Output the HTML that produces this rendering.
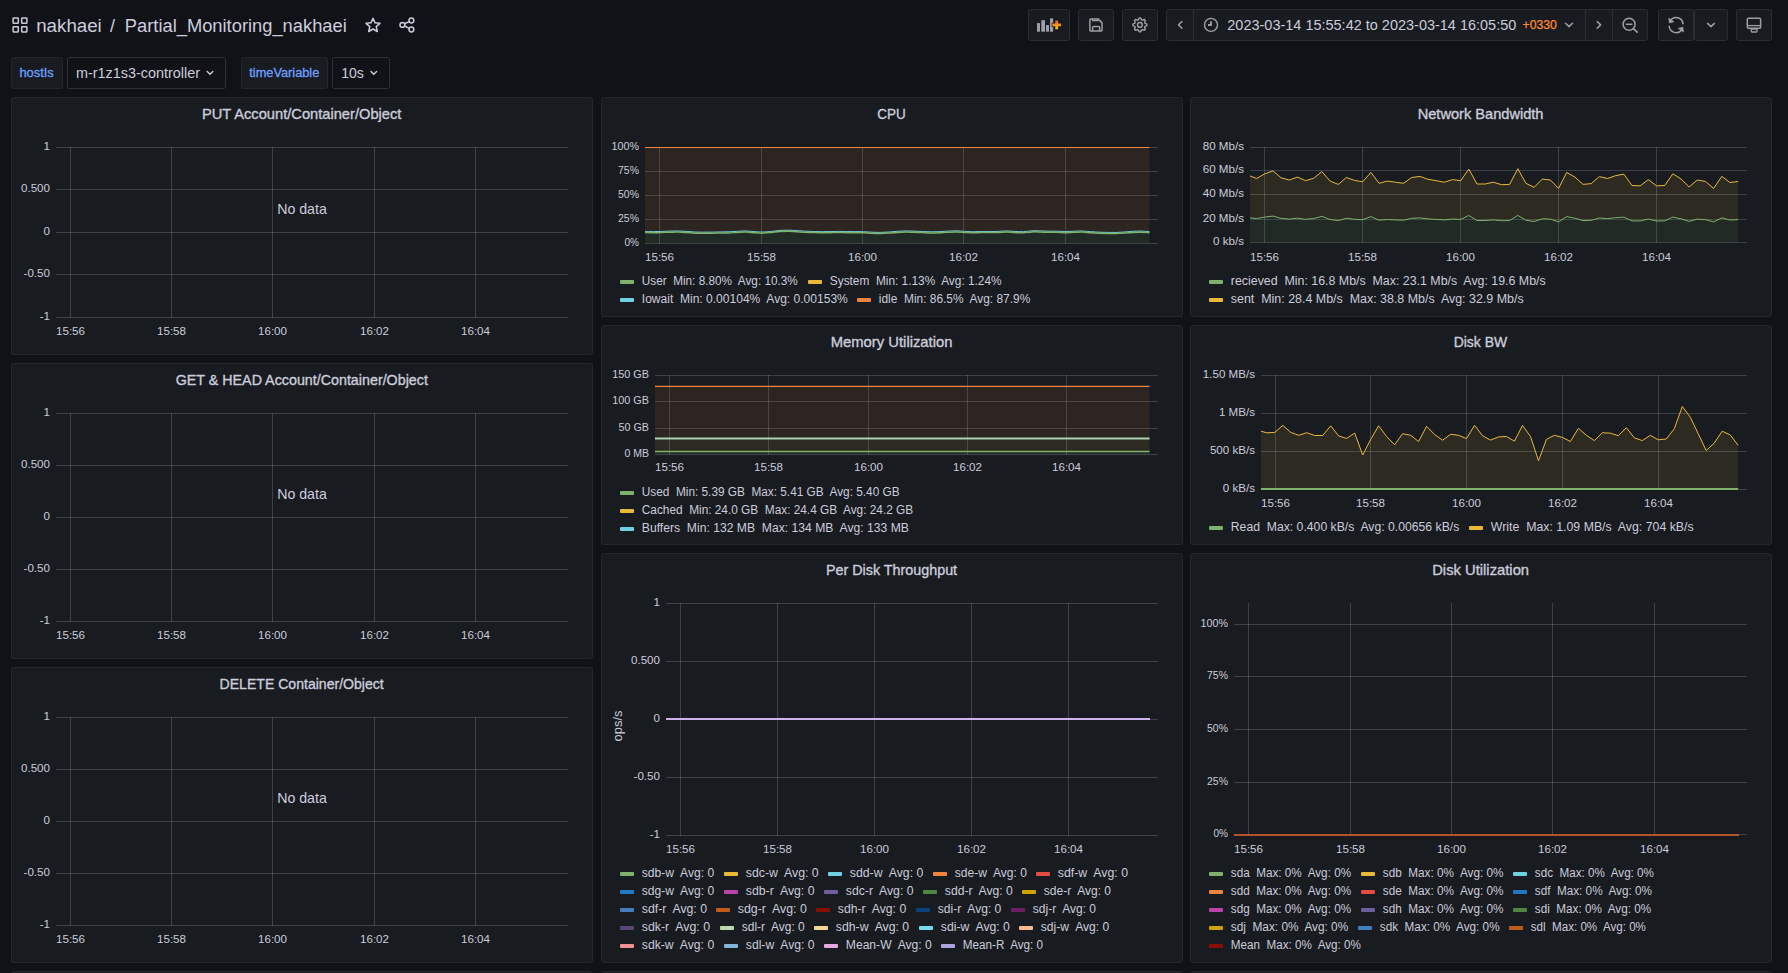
<!DOCTYPE html><html><head><meta charset="utf-8"><style>html,body{margin:0;padding:0;background:#111217;overflow:hidden}svg{display:block;font-family:"Liberation Sans", sans-serif}</style></head><body>
<svg width="1788" height="973" viewBox="0 0 1788 973">
<rect width="1788" height="973" fill="#111217"/>
<rect x="13.1" y="18.099999999999998" width="5.2" height="5.2" rx="0.6" fill="none" stroke="rgb(204,204,220)" stroke-width="1.5"/>
<rect x="21.7" y="18.099999999999998" width="5.2" height="5.2" rx="0.6" fill="none" stroke="rgb(204,204,220)" stroke-width="1.5"/>
<rect x="13.1" y="26.7" width="5.2" height="5.2" rx="0.6" fill="none" stroke="rgb(204,204,220)" stroke-width="1.5"/>
<rect x="21.7" y="26.7" width="5.2" height="5.2" rx="0.6" fill="none" stroke="rgb(204,204,220)" stroke-width="1.5"/>
<text x="36.2" y="32" font-size="18" fill="rgb(204,204,220)" textLength="65.6" lengthAdjust="spacingAndGlyphs">nakhaei</text>
<text x="110" y="32" font-size="18" fill="rgb(204,204,220)">/</text>
<text x="124.8" y="32" font-size="18" fill="rgb(204,204,220)" textLength="222" lengthAdjust="spacingAndGlyphs">Partial_Monitoring_nakhaei</text>
<polygon points="373.00,18.30 375.00,22.85 379.94,23.34 376.23,26.65 377.29,31.51 373.00,29.00 368.71,31.51 369.77,26.65 366.06,23.34 371.00,22.85" fill="none" stroke="rgb(204,204,220)" stroke-width="1.5" stroke-linejoin="round"/>
<g fill="none" stroke="rgb(204,204,220)" stroke-width="1.5"><circle cx="411.4" cy="20.5" r="2.4"/><circle cx="402.4" cy="24.9" r="2.4"/><circle cx="411.4" cy="29.5" r="2.4"/><line x1="404.6" y1="23.8" x2="409.2" y2="21.6"/><line x1="404.6" y1="26.0" x2="409.2" y2="28.3"/></g>
<rect x="1028.5" y="9.5" width="41" height="31" rx="2" fill="#181b1f" stroke="#2b2d32" stroke-width="1"/>
<rect x="1078.5" y="9.5" width="35" height="31" rx="2" fill="#181b1f" stroke="#2b2d32" stroke-width="1"/>
<rect x="1122.5" y="9.5" width="35" height="31" rx="2" fill="#181b1f" stroke="#2b2d32" stroke-width="1"/>
<rect x="1166.5" y="9.5" width="481" height="31" rx="2" fill="#181b1f" stroke="#2b2d32" stroke-width="1"/>
<line x1="1193.5" y1="10" x2="1193.5" y2="40" stroke="#2b2d32" stroke-width="1"/>
<line x1="1585.5" y1="10" x2="1585.5" y2="40" stroke="#2b2d32" stroke-width="1"/>
<line x1="1612.5" y1="10" x2="1612.5" y2="40" stroke="#2b2d32" stroke-width="1"/>
<rect x="1658.5" y="9.5" width="35" height="31" rx="2" fill="#181b1f" stroke="#2b2d32" stroke-width="1"/>
<rect x="1694.5" y="9.5" width="33" height="31" rx="2" fill="#181b1f" stroke="#2b2d32" stroke-width="1"/>
<rect x="1736.5" y="9.5" width="35" height="31" rx="2" fill="#181b1f" stroke="#2b2d32" stroke-width="1"/>
<rect x="1037" y="23.1" width="3" height="8.599999999999998" fill="#9c9fa7"/>
<rect x="1041.3" y="20.2" width="3.7000000000000455" height="11.5" fill="#9c9fa7"/>
<rect x="1046" y="25.1" width="3" height="6.599999999999998" fill="#9c9fa7"/>
<rect x="1050" y="18.4" width="3.2000000000000455" height="13.3" fill="#9c9fa7"/>
<defs><linearGradient id="og" x1="0" y1="0" x2="0" y2="1"><stop offset="0" stop-color="#F05A28"/><stop offset="1" stop-color="#FBCA0A"/></linearGradient></defs>
<path d="M1055.3,20.6h2.8v2.9h2.9v2.8h-2.9v2.9h-2.8v-2.9h-2.9v-2.8h2.9z" fill="none" stroke="#181b1f" stroke-width="1.4"/>
<path d="M1055.3,20.6h2.8v2.9h2.9v2.8h-2.9v2.9h-2.8v-2.9h-2.9v-2.8h2.9z" fill="url(#og)"/>
<path d="M1090.8,18.9 h7.2 l4,4 v7.3 a0.9,0.9 0 0 1 -0.9,0.9 h-10.3 a0.9,0.9 0 0 1 -0.9,-0.9 v-10.4 a0.9,0.9 0 0 1 0.9,-0.9z" fill="none" stroke="#9c9fa7" stroke-width="1.5" stroke-linejoin="round"/>
<path d="M1092.6,19 v1.7 h5.2 v-1.7" fill="none" stroke="#9c9fa7" stroke-width="1.3"/>
<path d="M1092.6,31 v-3.6 a1,1 0 0 1 1,-1 h5 a1,1 0 0 1 1,1 v3.6" fill="none" stroke="#9c9fa7" stroke-width="1.5"/>
<polygon points="1146.90,24.90 1146.87,25.59 1145.93,26.10 1144.97,26.44 1144.80,26.93 1144.57,27.40 1145.01,28.32 1145.31,29.34 1144.85,29.85 1144.34,30.31 1143.32,30.01 1142.40,29.57 1141.93,29.80 1141.44,29.97 1141.10,30.93 1140.59,31.87 1139.90,31.90 1139.21,31.87 1138.70,30.93 1138.36,29.97 1137.87,29.80 1137.40,29.57 1136.48,30.01 1135.46,30.31 1134.95,29.85 1134.49,29.34 1134.79,28.32 1135.23,27.40 1135.00,26.93 1134.83,26.44 1133.87,26.10 1132.93,25.59 1132.90,24.90 1132.93,24.21 1133.87,23.70 1134.83,23.36 1135.00,22.87 1135.23,22.40 1134.79,21.48 1134.49,20.46 1134.95,19.95 1135.46,19.49 1136.48,19.79 1137.40,20.23 1137.87,20.00 1138.36,19.83 1138.70,18.87 1139.21,17.93 1139.90,17.90 1140.59,17.93 1141.10,18.87 1141.44,19.83 1141.93,20.00 1142.40,20.23 1143.32,19.79 1144.34,19.49 1144.85,19.95 1145.31,20.46 1145.01,21.48 1144.57,22.40 1144.80,22.87 1144.97,23.36 1145.93,23.70 1146.87,24.21" fill="none" stroke="#9c9fa7" stroke-width="1.4" stroke-linejoin="round"/>
<circle cx="1139.9" cy="24.9" r="2.4" fill="none" stroke="#9c9fa7" stroke-width="1.4"/>
<polyline points="1181.9,21.5 1178.5,24.9 1181.9,28.3" fill="none" stroke="#9c9fa7" stroke-width="1.5" stroke-linecap="round" stroke-linejoin="round"/>
<polyline points="1597.2,21.5 1600.6,24.9 1597.2,28.3" fill="none" stroke="#9c9fa7" stroke-width="1.5" stroke-linecap="round" stroke-linejoin="round"/>
<polyline points="1565.5,23.3 1569,26.6 1572.5,23.3" fill="none" stroke="#9c9fa7" stroke-width="1.5" stroke-linecap="round" stroke-linejoin="round"/>
<polyline points="1707.6,23.4 1711,26.6 1714.4,23.4" fill="none" stroke="#9c9fa7" stroke-width="1.5" stroke-linecap="round" stroke-linejoin="round"/>
<circle cx="1211" cy="24.9" r="6.5" fill="none" stroke="#9c9fa7" stroke-width="1.4"/>
<polyline points="1211,21.3 1211,25 1208,25" fill="none" stroke="#9c9fa7" stroke-width="1.8"/>
<text x="1227.3" y="30" font-size="15" fill="rgb(204,204,220)" textLength="289" lengthAdjust="spacingAndGlyphs">2023-03-14 15:55:42 to 2023-03-14 16:05:50</text>
<text x="1522.5" y="29" font-size="12" fill="#FF8833" stroke="#FF8833" stroke-width="0.25" textLength="34.3" lengthAdjust="spacingAndGlyphs">+0330</text>
<circle cx="1629.1" cy="24.3" r="6" fill="none" stroke="#9c9fa7" stroke-width="1.5"/>
<line x1="1625.8" y1="24.3" x2="1632.4" y2="24.3" stroke="#9c9fa7" stroke-width="1.5"/>
<line x1="1633.4" y1="28.6" x2="1637.2" y2="32.2" stroke="#9c9fa7" stroke-width="1.6" stroke-linecap="round"/>
<path d="M1670.2,20.6 A7,7 0 0 1 1683,24.2" fill="none" stroke="#9c9fa7" stroke-width="1.5"/>
<path d="M1682,29.6 A7,7 0 0 1 1669.2,25.8" fill="none" stroke="#9c9fa7" stroke-width="1.5"/>
<path d="M1668.8,18.3 l0.6,4.6 l4.4,-1.2z" fill="#9c9fa7" stroke="#9c9fa7" stroke-width="0.8" stroke-linejoin="round"/>
<path d="M1683.4,31.8 l-0.6,-4.6 l-4.4,1.2z" fill="#9c9fa7" stroke="#9c9fa7" stroke-width="0.8" stroke-linejoin="round"/>
<rect x="1747.3" y="18.3" width="13.3" height="10" rx="1.2" fill="none" stroke="#9c9fa7" stroke-width="1.5"/>
<line x1="1747.3" y1="25.6" x2="1760.6" y2="25.6" stroke="#9c9fa7" stroke-width="1.3"/>
<rect x="1751.2" y="29" width="5.8" height="3" rx="0.8" fill="none" stroke="#9c9fa7" stroke-width="1.3"/>
<rect x="11.5" y="57.5" width="51" height="31" rx="2" fill="#181b1f" stroke="#24262b" stroke-width="1"/>
<rect x="67.5" y="57.5" width="158" height="31" rx="2" fill="#111217" stroke="#2f3136" stroke-width="1"/>
<rect x="241.5" y="57.5" width="86" height="31" rx="2" fill="#181b1f" stroke="#24262b" stroke-width="1"/>
<rect x="332.5" y="57.5" width="57" height="31" rx="2" fill="#111217" stroke="#2f3136" stroke-width="1"/>
<text x="19.4" y="77" font-size="12.4" fill="#6E9FFF" stroke="#6E9FFF" stroke-width="0.3" textLength="34.4" lengthAdjust="spacingAndGlyphs">hostIs</text>
<text x="249.3" y="77" font-size="12.4" fill="#6E9FFF" stroke="#6E9FFF" stroke-width="0.3" textLength="70.0" lengthAdjust="spacingAndGlyphs">timeVariable</text>
<text x="76" y="78" font-size="14" fill="rgb(204,204,220)" textLength="124" lengthAdjust="spacingAndGlyphs">m-r1z1s3-controller</text>
<text x="341.3" y="78" font-size="14" fill="rgb(204,204,220)">10s</text>
<polyline points="207.2,71.5 210,74.2 212.8,71.5" fill="none" stroke="rgb(204,204,220)" stroke-width="1.4" stroke-linecap="round" stroke-linejoin="round"/>
<polyline points="371,71.5 373.8,74.2 376.6,71.5" fill="none" stroke="rgb(204,204,220)" stroke-width="1.4" stroke-linecap="round" stroke-linejoin="round"/>
<rect x="11.5" y="97.5" width="581" height="257" rx="2.5" fill="#181b1f" stroke="#25272c" stroke-width="1"/>
<text x="201.9" y="119" font-size="14.6" fill="rgb(204,204,220)" stroke="rgb(204,204,220)" stroke-width="0.35" textLength="199.5" lengthAdjust="spacingAndGlyphs">PUT Account/Container/Object</text>
<line x1="56" y1="147.5" x2="568" y2="147.5" stroke="rgba(204,204,220,0.21)" stroke-width="1"/>
<line x1="56" y1="189.5" x2="568" y2="189.5" stroke="rgba(204,204,220,0.21)" stroke-width="1"/>
<line x1="56" y1="232.5" x2="568" y2="232.5" stroke="rgba(204,204,220,0.21)" stroke-width="1"/>
<line x1="56" y1="274.5" x2="568" y2="274.5" stroke="rgba(204,204,220,0.21)" stroke-width="1"/>
<line x1="56" y1="317.5" x2="568" y2="317.5" stroke="rgba(204,204,220,0.21)" stroke-width="1"/>
<line x1="70.5" y1="147" x2="70.5" y2="318" stroke="rgba(204,204,220,0.21)" stroke-width="1"/>
<line x1="171.5" y1="147" x2="171.5" y2="318" stroke="rgba(204,204,220,0.21)" stroke-width="1"/>
<line x1="272.5" y1="147" x2="272.5" y2="318" stroke="rgba(204,204,220,0.21)" stroke-width="1"/>
<line x1="374.5" y1="147" x2="374.5" y2="318" stroke="rgba(204,204,220,0.21)" stroke-width="1"/>
<line x1="475.5" y1="147" x2="475.5" y2="318" stroke="rgba(204,204,220,0.21)" stroke-width="1"/>
<text x="50" y="150.4" font-size="11.6" text-anchor="end" fill="rgb(204,204,220)" font-weight="normal" >1</text>
<text x="50" y="192.4" font-size="11.6" text-anchor="end" fill="rgb(204,204,220)" font-weight="normal" >0.500</text>
<text x="50" y="235.4" font-size="11.6" text-anchor="end" fill="rgb(204,204,220)" font-weight="normal" >0</text>
<text x="50" y="277.4" font-size="11.6" text-anchor="end" fill="rgb(204,204,220)" font-weight="normal" >-0.50</text>
<text x="50" y="320.4" font-size="11.6" text-anchor="end" fill="rgb(204,204,220)" font-weight="normal" >-1</text>
<text x="70.5" y="334.6" font-size="11.6" text-anchor="middle" fill="rgb(204,204,220)" font-weight="normal" >15:56</text>
<text x="171.5" y="334.6" font-size="11.6" text-anchor="middle" fill="rgb(204,204,220)" font-weight="normal" >15:58</text>
<text x="272.5" y="334.6" font-size="11.6" text-anchor="middle" fill="rgb(204,204,220)" font-weight="normal" >16:00</text>
<text x="374.5" y="334.6" font-size="11.6" text-anchor="middle" fill="rgb(204,204,220)" font-weight="normal" >16:02</text>
<text x="475.5" y="334.6" font-size="11.6" text-anchor="middle" fill="rgb(204,204,220)" font-weight="normal" >16:04</text>
<text x="302" y="213.5" font-size="14.2" text-anchor="middle" fill="rgb(204,204,220)" font-weight="normal" >No data</text>
<rect x="11.5" y="363.5" width="581" height="295" rx="2.5" fill="#181b1f" stroke="#25272c" stroke-width="1"/>
<text x="175.7" y="385" font-size="14.6" fill="rgb(204,204,220)" stroke="rgb(204,204,220)" stroke-width="0.35" textLength="252.2" lengthAdjust="spacingAndGlyphs">GET &amp; HEAD Account/Container/Object</text>
<line x1="56" y1="413.5" x2="568" y2="413.5" stroke="rgba(204,204,220,0.21)" stroke-width="1"/>
<line x1="56" y1="465.5" x2="568" y2="465.5" stroke="rgba(204,204,220,0.21)" stroke-width="1"/>
<line x1="56" y1="517.5" x2="568" y2="517.5" stroke="rgba(204,204,220,0.21)" stroke-width="1"/>
<line x1="56" y1="569.5" x2="568" y2="569.5" stroke="rgba(204,204,220,0.21)" stroke-width="1"/>
<line x1="56" y1="621.5" x2="568" y2="621.5" stroke="rgba(204,204,220,0.21)" stroke-width="1"/>
<line x1="70.5" y1="413" x2="70.5" y2="622" stroke="rgba(204,204,220,0.21)" stroke-width="1"/>
<line x1="171.5" y1="413" x2="171.5" y2="622" stroke="rgba(204,204,220,0.21)" stroke-width="1"/>
<line x1="272.5" y1="413" x2="272.5" y2="622" stroke="rgba(204,204,220,0.21)" stroke-width="1"/>
<line x1="374.5" y1="413" x2="374.5" y2="622" stroke="rgba(204,204,220,0.21)" stroke-width="1"/>
<line x1="475.5" y1="413" x2="475.5" y2="622" stroke="rgba(204,204,220,0.21)" stroke-width="1"/>
<text x="50" y="416.4" font-size="11.6" text-anchor="end" fill="rgb(204,204,220)" font-weight="normal" >1</text>
<text x="50" y="468.4" font-size="11.6" text-anchor="end" fill="rgb(204,204,220)" font-weight="normal" >0.500</text>
<text x="50" y="520.4" font-size="11.6" text-anchor="end" fill="rgb(204,204,220)" font-weight="normal" >0</text>
<text x="50" y="572.4" font-size="11.6" text-anchor="end" fill="rgb(204,204,220)" font-weight="normal" >-0.50</text>
<text x="50" y="624.4" font-size="11.6" text-anchor="end" fill="rgb(204,204,220)" font-weight="normal" >-1</text>
<text x="70.5" y="638.6" font-size="11.6" text-anchor="middle" fill="rgb(204,204,220)" font-weight="normal" >15:56</text>
<text x="171.5" y="638.6" font-size="11.6" text-anchor="middle" fill="rgb(204,204,220)" font-weight="normal" >15:58</text>
<text x="272.5" y="638.6" font-size="11.6" text-anchor="middle" fill="rgb(204,204,220)" font-weight="normal" >16:00</text>
<text x="374.5" y="638.6" font-size="11.6" text-anchor="middle" fill="rgb(204,204,220)" font-weight="normal" >16:02</text>
<text x="475.5" y="638.6" font-size="11.6" text-anchor="middle" fill="rgb(204,204,220)" font-weight="normal" >16:04</text>
<text x="302" y="498.5" font-size="14.2" text-anchor="middle" fill="rgb(204,204,220)" font-weight="normal" >No data</text>
<rect x="11.5" y="667.5" width="581" height="295" rx="2.5" fill="#181b1f" stroke="#25272c" stroke-width="1"/>
<text x="219.6" y="689" font-size="14.6" fill="rgb(204,204,220)" stroke="rgb(204,204,220)" stroke-width="0.35" textLength="164.1" lengthAdjust="spacingAndGlyphs">DELETE Container/Object</text>
<line x1="56" y1="717.5" x2="568" y2="717.5" stroke="rgba(204,204,220,0.21)" stroke-width="1"/>
<line x1="56" y1="769.5" x2="568" y2="769.5" stroke="rgba(204,204,220,0.21)" stroke-width="1"/>
<line x1="56" y1="821.5" x2="568" y2="821.5" stroke="rgba(204,204,220,0.21)" stroke-width="1"/>
<line x1="56" y1="873.5" x2="568" y2="873.5" stroke="rgba(204,204,220,0.21)" stroke-width="1"/>
<line x1="56" y1="925.5" x2="568" y2="925.5" stroke="rgba(204,204,220,0.21)" stroke-width="1"/>
<line x1="70.5" y1="717" x2="70.5" y2="926" stroke="rgba(204,204,220,0.21)" stroke-width="1"/>
<line x1="171.5" y1="717" x2="171.5" y2="926" stroke="rgba(204,204,220,0.21)" stroke-width="1"/>
<line x1="272.5" y1="717" x2="272.5" y2="926" stroke="rgba(204,204,220,0.21)" stroke-width="1"/>
<line x1="374.5" y1="717" x2="374.5" y2="926" stroke="rgba(204,204,220,0.21)" stroke-width="1"/>
<line x1="475.5" y1="717" x2="475.5" y2="926" stroke="rgba(204,204,220,0.21)" stroke-width="1"/>
<text x="50" y="720.4" font-size="11.6" text-anchor="end" fill="rgb(204,204,220)" font-weight="normal" >1</text>
<text x="50" y="772.4" font-size="11.6" text-anchor="end" fill="rgb(204,204,220)" font-weight="normal" >0.500</text>
<text x="50" y="824.4" font-size="11.6" text-anchor="end" fill="rgb(204,204,220)" font-weight="normal" >0</text>
<text x="50" y="876.4" font-size="11.6" text-anchor="end" fill="rgb(204,204,220)" font-weight="normal" >-0.50</text>
<text x="50" y="928.4" font-size="11.6" text-anchor="end" fill="rgb(204,204,220)" font-weight="normal" >-1</text>
<text x="70.5" y="942.6" font-size="11.6" text-anchor="middle" fill="rgb(204,204,220)" font-weight="normal" >15:56</text>
<text x="171.5" y="942.6" font-size="11.6" text-anchor="middle" fill="rgb(204,204,220)" font-weight="normal" >15:58</text>
<text x="272.5" y="942.6" font-size="11.6" text-anchor="middle" fill="rgb(204,204,220)" font-weight="normal" >16:00</text>
<text x="374.5" y="942.6" font-size="11.6" text-anchor="middle" fill="rgb(204,204,220)" font-weight="normal" >16:02</text>
<text x="475.5" y="942.6" font-size="11.6" text-anchor="middle" fill="rgb(204,204,220)" font-weight="normal" >16:04</text>
<text x="302" y="802.5" font-size="14.2" text-anchor="middle" fill="rgb(204,204,220)" font-weight="normal" >No data</text>
<rect x="601.5" y="97.5" width="581" height="219" rx="2.5" fill="#181b1f" stroke="#25272c" stroke-width="1"/>
<text x="877.2" y="119" font-size="14.6" fill="rgb(204,204,220)" stroke="rgb(204,204,220)" stroke-width="0.35" textLength="28.5" lengthAdjust="spacingAndGlyphs">CPU</text>
<line x1="645" y1="147.5" x2="1158" y2="147.5" stroke="rgba(204,204,220,0.21)" stroke-width="1"/>
<line x1="645" y1="171.5" x2="1158" y2="171.5" stroke="rgba(204,204,220,0.21)" stroke-width="1"/>
<line x1="645" y1="195.5" x2="1158" y2="195.5" stroke="rgba(204,204,220,0.21)" stroke-width="1"/>
<line x1="645" y1="219.5" x2="1158" y2="219.5" stroke="rgba(204,204,220,0.21)" stroke-width="1"/>
<line x1="645" y1="243.5" x2="1158" y2="243.5" stroke="rgba(204,204,220,0.21)" stroke-width="1"/>
<line x1="659.5" y1="147" x2="659.5" y2="244" stroke="rgba(204,204,220,0.21)" stroke-width="1"/>
<line x1="761.5" y1="147" x2="761.5" y2="244" stroke="rgba(204,204,220,0.21)" stroke-width="1"/>
<line x1="862.5" y1="147" x2="862.5" y2="244" stroke="rgba(204,204,220,0.21)" stroke-width="1"/>
<line x1="963.5" y1="147" x2="963.5" y2="244" stroke="rgba(204,204,220,0.21)" stroke-width="1"/>
<line x1="1065.5" y1="147" x2="1065.5" y2="244" stroke="rgba(204,204,220,0.21)" stroke-width="1"/>
<text x="639" y="150.4" font-size="11.6" text-anchor="end" fill="rgb(204,204,220)" font-weight="normal" textLength="27.4" lengthAdjust="spacingAndGlyphs">100%</text>
<text x="639" y="174.4" font-size="11.6" text-anchor="end" fill="rgb(204,204,220)" font-weight="normal" textLength="21.0" lengthAdjust="spacingAndGlyphs">75%</text>
<text x="639" y="198.4" font-size="11.6" text-anchor="end" fill="rgb(204,204,220)" font-weight="normal" textLength="21.0" lengthAdjust="spacingAndGlyphs">50%</text>
<text x="639" y="222.4" font-size="11.6" text-anchor="end" fill="rgb(204,204,220)" font-weight="normal" textLength="21.0" lengthAdjust="spacingAndGlyphs">25%</text>
<text x="639" y="246.4" font-size="11.6" text-anchor="end" fill="rgb(204,204,220)" font-weight="normal" textLength="14.5" lengthAdjust="spacingAndGlyphs">0%</text>
<text x="659.5" y="260.6" font-size="11.6" text-anchor="middle" fill="rgb(204,204,220)" font-weight="normal" >15:56</text>
<text x="761.5" y="260.6" font-size="11.6" text-anchor="middle" fill="rgb(204,204,220)" font-weight="normal" >15:58</text>
<text x="862.5" y="260.6" font-size="11.6" text-anchor="middle" fill="rgb(204,204,220)" font-weight="normal" >16:00</text>
<text x="963.5" y="260.6" font-size="11.6" text-anchor="middle" fill="rgb(204,204,220)" font-weight="normal" >16:02</text>
<text x="1065.5" y="260.6" font-size="11.6" text-anchor="middle" fill="rgb(204,204,220)" font-weight="normal" >16:04</text>
<polygon points="645.0,232.5 653.4,232.7 661.8,232.5 670.2,232.2 678.6,232.1 687.0,232.5 695.5,233.1 703.9,233.3 712.3,233.2 720.7,233.0 729.1,232.9 737.5,232.4 745.9,232.1 754.3,232.7 762.7,233.1 771.1,232.6 779.5,231.6 787.9,231.2 796.4,231.7 804.8,232.3 813.2,232.6 821.6,232.8 830.0,232.7 838.4,232.5 846.8,232.7 855.2,232.7 863.6,232.8 872.0,233.3 880.4,233.5 888.8,233.1 897.2,232.4 905.7,232.1 914.1,232.3 922.5,232.6 930.9,232.9 939.3,232.8 947.7,232.2 956.1,232.0 964.5,232.4 972.9,232.9 981.3,232.6 989.7,232.6 998.1,232.5 1006.6,232.0 1015.0,232.6 1023.4,232.7 1031.8,231.9 1040.2,232.0 1048.6,232.3 1057.0,232.3 1065.4,232.6 1073.8,232.4 1082.2,232.1 1090.6,232.8 1099.0,233.3 1107.5,233.5 1115.9,233.5 1124.3,233.1 1132.7,232.4 1141.1,232.2 1149.5,232.7 1149.5,243.0 1141.1,243.0 1132.7,243.0 1124.3,243.0 1115.9,243.0 1107.5,243.0 1099.0,243.0 1090.6,243.0 1082.2,243.0 1073.8,243.0 1065.4,243.0 1057.0,243.0 1048.6,243.0 1040.2,243.0 1031.8,243.0 1023.4,243.0 1015.0,243.0 1006.6,243.0 998.1,243.0 989.7,243.0 981.3,243.0 972.9,243.0 964.5,243.0 956.1,243.0 947.7,243.0 939.3,243.0 930.9,243.0 922.5,243.0 914.1,243.0 905.7,243.0 897.2,243.0 888.8,243.0 880.4,243.0 872.0,243.0 863.6,243.0 855.2,243.0 846.8,243.0 838.4,243.0 830.0,243.0 821.6,243.0 813.2,243.0 804.8,243.0 796.4,243.0 787.9,243.0 779.5,243.0 771.1,243.0 762.7,243.0 754.3,243.0 745.9,243.0 737.5,243.0 729.1,243.0 720.7,243.0 712.3,243.0 703.9,243.0 695.5,243.0 687.0,243.0 678.6,243.0 670.2,243.0 661.8,243.0 653.4,243.0 645.0,243.0" fill="#7EB26D" fill-opacity="0.1" stroke="none"/>
<polygon points="645.0,231.4 653.4,231.6 661.8,231.4 670.2,231.1 678.6,231.0 687.0,231.4 695.5,232.0 703.9,232.2 712.3,232.1 720.7,231.9 729.1,231.8 737.5,231.3 745.9,231.0 754.3,231.6 762.7,232.0 771.1,231.5 779.5,230.5 787.9,230.1 796.4,230.6 804.8,231.2 813.2,231.5 821.6,231.7 830.0,231.6 838.4,231.4 846.8,231.6 855.2,231.6 863.6,231.7 872.0,232.2 880.4,232.4 888.8,232.0 897.2,231.3 905.7,231.0 914.1,231.2 922.5,231.5 930.9,231.8 939.3,231.7 947.7,231.1 956.1,230.9 964.5,231.3 972.9,231.8 981.3,231.5 989.7,231.5 998.1,231.4 1006.6,230.9 1015.0,231.5 1023.4,231.6 1031.8,230.8 1040.2,230.9 1048.6,231.2 1057.0,231.2 1065.4,231.5 1073.8,231.3 1082.2,231.0 1090.6,231.7 1099.0,232.2 1107.5,232.4 1115.9,232.4 1124.3,232.0 1132.7,231.3 1141.1,231.1 1149.5,231.6 1149.5,232.7 1141.1,232.2 1132.7,232.4 1124.3,233.1 1115.9,233.5 1107.5,233.5 1099.0,233.3 1090.6,232.8 1082.2,232.1 1073.8,232.4 1065.4,232.6 1057.0,232.3 1048.6,232.3 1040.2,232.0 1031.8,231.9 1023.4,232.7 1015.0,232.6 1006.6,232.0 998.1,232.5 989.7,232.6 981.3,232.6 972.9,232.9 964.5,232.4 956.1,232.0 947.7,232.2 939.3,232.8 930.9,232.9 922.5,232.6 914.1,232.3 905.7,232.1 897.2,232.4 888.8,233.1 880.4,233.5 872.0,233.3 863.6,232.8 855.2,232.7 846.8,232.7 838.4,232.5 830.0,232.7 821.6,232.8 813.2,232.6 804.8,232.3 796.4,231.7 787.9,231.2 779.5,231.6 771.1,232.6 762.7,233.1 754.3,232.7 745.9,232.1 737.5,232.4 729.1,232.9 720.7,233.0 712.3,233.2 703.9,233.3 695.5,233.1 687.0,232.5 678.6,232.1 670.2,232.2 661.8,232.5 653.4,232.7 645.0,232.5" fill="#EAB839" fill-opacity="0.1" stroke="none"/>
<polygon points="645.0,147.5 653.4,147.5 661.8,147.5 670.2,147.5 678.6,147.5 687.0,147.5 695.5,147.5 703.9,147.5 712.3,147.5 720.7,147.5 729.1,147.5 737.5,147.5 745.9,147.5 754.3,147.5 762.7,147.5 771.1,147.5 779.5,147.5 787.9,147.5 796.4,147.5 804.8,147.5 813.2,147.5 821.6,147.5 830.0,147.5 838.4,147.5 846.8,147.5 855.2,147.5 863.6,147.5 872.0,147.5 880.4,147.5 888.8,147.5 897.2,147.5 905.7,147.5 914.1,147.5 922.5,147.5 930.9,147.5 939.3,147.5 947.7,147.5 956.1,147.5 964.5,147.5 972.9,147.5 981.3,147.5 989.7,147.5 998.1,147.5 1006.6,147.5 1015.0,147.5 1023.4,147.5 1031.8,147.5 1040.2,147.5 1048.6,147.5 1057.0,147.5 1065.4,147.5 1073.8,147.5 1082.2,147.5 1090.6,147.5 1099.0,147.5 1107.5,147.5 1115.9,147.5 1124.3,147.5 1132.7,147.5 1141.1,147.5 1149.5,147.5 1149.5,231.6 1141.1,231.1 1132.7,231.3 1124.3,232.0 1115.9,232.4 1107.5,232.4 1099.0,232.2 1090.6,231.7 1082.2,231.0 1073.8,231.3 1065.4,231.5 1057.0,231.2 1048.6,231.2 1040.2,230.9 1031.8,230.8 1023.4,231.6 1015.0,231.5 1006.6,230.9 998.1,231.4 989.7,231.5 981.3,231.5 972.9,231.8 964.5,231.3 956.1,230.9 947.7,231.1 939.3,231.7 930.9,231.8 922.5,231.5 914.1,231.2 905.7,231.0 897.2,231.3 888.8,232.0 880.4,232.4 872.0,232.2 863.6,231.7 855.2,231.6 846.8,231.6 838.4,231.4 830.0,231.6 821.6,231.7 813.2,231.5 804.8,231.2 796.4,230.6 787.9,230.1 779.5,230.5 771.1,231.5 762.7,232.0 754.3,231.6 745.9,231.0 737.5,231.3 729.1,231.8 720.7,231.9 712.3,232.1 703.9,232.2 695.5,232.0 687.0,231.4 678.6,231.0 670.2,231.1 661.8,231.4 653.4,231.6 645.0,231.4" fill="#EF843C" fill-opacity="0.1" stroke="none"/>
<path d="M645.0,231.44 C646.4,231.47 650.6,231.62 653.4,231.62 C656.2,231.62 659.0,231.53 661.8,231.44 C664.6,231.36 667.4,231.18 670.2,231.10 C673.0,231.02 675.8,230.90 678.6,230.96 C681.4,231.02 684.2,231.26 687.0,231.44 C689.8,231.63 692.6,231.93 695.5,232.05 C698.3,232.17 701.1,232.16 703.9,232.17 C706.7,232.19 709.5,232.16 712.3,232.12 C715.1,232.08 717.9,231.99 720.7,231.93 C723.5,231.88 726.3,231.88 729.1,231.78 C731.9,231.67 734.7,231.43 737.5,231.30 C740.3,231.17 743.1,230.93 745.9,230.98 C748.7,231.04 751.5,231.45 754.3,231.62 C757.1,231.80 759.9,232.06 762.7,232.03 C765.5,232.00 768.3,231.72 771.1,231.46 C773.9,231.20 776.7,230.68 779.5,230.46 C782.3,230.24 785.1,230.11 787.9,230.13 C790.7,230.16 793.5,230.43 796.4,230.60 C799.2,230.77 802.0,231.00 804.8,231.16 C807.6,231.31 810.4,231.44 813.2,231.52 C816.0,231.61 818.8,231.66 821.6,231.67 C824.4,231.67 827.2,231.62 830.0,231.58 C832.8,231.54 835.6,231.40 838.4,231.40 C841.2,231.40 844.0,231.55 846.8,231.58 C849.6,231.62 852.4,231.58 855.2,231.60 C858.0,231.61 860.8,231.57 863.6,231.68 C866.4,231.79 869.2,232.13 872.0,232.25 C874.8,232.37 877.6,232.44 880.4,232.41 C883.2,232.37 886.0,232.20 888.8,232.02 C891.6,231.84 894.4,231.50 897.2,231.32 C900.1,231.14 902.9,230.98 905.7,230.95 C908.5,230.92 911.3,231.06 914.1,231.15 C916.9,231.25 919.7,231.41 922.5,231.52 C925.3,231.63 928.1,231.79 930.9,231.82 C933.7,231.84 936.5,231.77 939.3,231.65 C942.1,231.54 944.9,231.27 947.7,231.14 C950.5,231.01 953.3,230.82 956.1,230.85 C958.9,230.88 961.7,231.18 964.5,231.33 C967.3,231.47 970.1,231.73 972.9,231.75 C975.7,231.77 978.5,231.50 981.3,231.47 C984.1,231.43 986.9,231.53 989.7,231.52 C992.5,231.52 995.3,231.51 998.1,231.41 C1001.0,231.31 1003.8,230.93 1006.6,230.94 C1009.4,230.95 1012.2,231.36 1015.0,231.48 C1017.8,231.60 1020.6,231.76 1023.4,231.65 C1026.2,231.53 1029.0,230.94 1031.8,230.82 C1034.6,230.69 1037.4,230.81 1040.2,230.88 C1043.0,230.94 1045.8,231.14 1048.6,231.20 C1051.4,231.25 1054.2,231.17 1057.0,231.22 C1059.8,231.28 1062.6,231.52 1065.4,231.53 C1068.2,231.53 1071.0,231.34 1073.8,231.25 C1076.6,231.17 1079.4,230.94 1082.2,231.01 C1085.0,231.09 1087.8,231.50 1090.6,231.69 C1093.4,231.89 1096.2,232.08 1099.0,232.20 C1101.9,232.32 1104.7,232.36 1107.5,232.40 C1110.3,232.44 1113.1,232.51 1115.9,232.44 C1118.7,232.38 1121.5,232.20 1124.3,232.01 C1127.1,231.83 1129.9,231.50 1132.7,231.34 C1135.5,231.19 1138.3,231.03 1141.1,231.08 C1143.9,231.13 1148.1,231.53 1149.5,231.62" fill="none" stroke="#6ED0E0" stroke-width="1"/>
<path d="M645.0,232.54 C646.4,232.57 650.6,232.72 653.4,232.72 C656.2,232.72 659.0,232.63 661.8,232.54 C664.6,232.46 667.4,232.28 670.2,232.20 C673.0,232.12 675.8,232.00 678.6,232.06 C681.4,232.12 684.2,232.36 687.0,232.54 C689.8,232.73 692.6,233.03 695.5,233.15 C698.3,233.27 701.1,233.26 703.9,233.27 C706.7,233.29 709.5,233.26 712.3,233.22 C715.1,233.18 717.9,233.09 720.7,233.03 C723.5,232.98 726.3,232.98 729.1,232.88 C731.9,232.77 734.7,232.53 737.5,232.40 C740.3,232.27 743.1,232.03 745.9,232.08 C748.7,232.14 751.5,232.55 754.3,232.72 C757.1,232.90 759.9,233.16 762.7,233.13 C765.5,233.10 768.3,232.82 771.1,232.56 C773.9,232.30 776.7,231.78 779.5,231.56 C782.3,231.34 785.1,231.21 787.9,231.23 C790.7,231.26 793.5,231.53 796.4,231.70 C799.2,231.87 802.0,232.10 804.8,232.26 C807.6,232.41 810.4,232.54 813.2,232.62 C816.0,232.71 818.8,232.76 821.6,232.77 C824.4,232.77 827.2,232.72 830.0,232.68 C832.8,232.64 835.6,232.50 838.4,232.50 C841.2,232.50 844.0,232.65 846.8,232.68 C849.6,232.72 852.4,232.68 855.2,232.70 C858.0,232.71 860.8,232.67 863.6,232.78 C866.4,232.89 869.2,233.23 872.0,233.35 C874.8,233.47 877.6,233.54 880.4,233.51 C883.2,233.47 886.0,233.30 888.8,233.12 C891.6,232.94 894.4,232.60 897.2,232.42 C900.1,232.24 902.9,232.08 905.7,232.05 C908.5,232.02 911.3,232.16 914.1,232.25 C916.9,232.35 919.7,232.51 922.5,232.62 C925.3,232.73 928.1,232.89 930.9,232.92 C933.7,232.94 936.5,232.87 939.3,232.75 C942.1,232.64 944.9,232.37 947.7,232.24 C950.5,232.11 953.3,231.92 956.1,231.95 C958.9,231.98 961.7,232.28 964.5,232.43 C967.3,232.57 970.1,232.83 972.9,232.85 C975.7,232.87 978.5,232.60 981.3,232.57 C984.1,232.53 986.9,232.63 989.7,232.62 C992.5,232.62 995.3,232.61 998.1,232.51 C1001.0,232.41 1003.8,232.03 1006.6,232.04 C1009.4,232.05 1012.2,232.46 1015.0,232.58 C1017.8,232.70 1020.6,232.86 1023.4,232.75 C1026.2,232.63 1029.0,232.04 1031.8,231.92 C1034.6,231.79 1037.4,231.91 1040.2,231.98 C1043.0,232.04 1045.8,232.24 1048.6,232.30 C1051.4,232.35 1054.2,232.27 1057.0,232.32 C1059.8,232.38 1062.6,232.62 1065.4,232.63 C1068.2,232.63 1071.0,232.44 1073.8,232.35 C1076.6,232.27 1079.4,232.04 1082.2,232.11 C1085.0,232.19 1087.8,232.60 1090.6,232.79 C1093.4,232.99 1096.2,233.18 1099.0,233.30 C1101.9,233.42 1104.7,233.46 1107.5,233.50 C1110.3,233.54 1113.1,233.61 1115.9,233.54 C1118.7,233.48 1121.5,233.30 1124.3,233.11 C1127.1,232.93 1129.9,232.60 1132.7,232.44 C1135.5,232.29 1138.3,232.13 1141.1,232.18 C1143.9,232.23 1148.1,232.63 1149.5,232.72" fill="none" stroke="#7EB26D" stroke-width="1.5"/>
<polyline points="645.0,147.5 653.4,147.5 661.8,147.5 670.2,147.5 678.6,147.5 687.0,147.5 695.5,147.5 703.9,147.5 712.3,147.5 720.7,147.5 729.1,147.5 737.5,147.5 745.9,147.5 754.3,147.5 762.7,147.5 771.1,147.5 779.5,147.5 787.9,147.5 796.4,147.5 804.8,147.5 813.2,147.5 821.6,147.5 830.0,147.5 838.4,147.5 846.8,147.5 855.2,147.5 863.6,147.5 872.0,147.5 880.4,147.5 888.8,147.5 897.2,147.5 905.7,147.5 914.1,147.5 922.5,147.5 930.9,147.5 939.3,147.5 947.7,147.5 956.1,147.5 964.5,147.5 972.9,147.5 981.3,147.5 989.7,147.5 998.1,147.5 1006.6,147.5 1015.0,147.5 1023.4,147.5 1031.8,147.5 1040.2,147.5 1048.6,147.5 1057.0,147.5 1065.4,147.5 1073.8,147.5 1082.2,147.5 1090.6,147.5 1099.0,147.5 1107.5,147.5 1115.9,147.5 1124.3,147.5 1132.7,147.5 1141.1,147.5 1149.5,147.5" fill="none" stroke="#EF843C" stroke-width="1.2" stroke-linejoin="round"/>
<rect x="620" y="280" width="14" height="4" rx="1" fill="#7EB26D"/>
<text x="641.8" y="285" font-size="12" fill="rgb(204,204,220)" xml:space="preserve" textLength="156.0" lengthAdjust="spacingAndGlyphs">User  Min: 8.80%  Avg: 10.3%</text>
<rect x="808" y="280" width="14" height="4" rx="1" fill="#EAB839"/>
<text x="829.8" y="285" font-size="12" fill="rgb(204,204,220)" xml:space="preserve" textLength="171.8" lengthAdjust="spacingAndGlyphs">System  Min: 1.13%  Avg: 1.24%</text>
<rect x="620" y="298" width="14" height="4" rx="1" fill="#6ED0E0"/>
<text x="641.8" y="303" font-size="12" fill="rgb(204,204,220)" xml:space="preserve" textLength="206.0" lengthAdjust="spacingAndGlyphs">Iowait  Min: 0.00104%  Avg: 0.00153%</text>
<rect x="857" y="298" width="14" height="4" rx="1" fill="#EF843C"/>
<text x="878.8" y="303" font-size="12" fill="rgb(204,204,220)" xml:space="preserve" textLength="151.5" lengthAdjust="spacingAndGlyphs">idle  Min: 86.5%  Avg: 87.9%</text>
<rect x="601.5" y="325.5" width="581" height="219" rx="2.5" fill="#181b1f" stroke="#25272c" stroke-width="1"/>
<text x="830.7" y="347" font-size="14.6" fill="rgb(204,204,220)" stroke="rgb(204,204,220)" stroke-width="0.35" textLength="121.8" lengthAdjust="spacingAndGlyphs">Memory Utilization</text>
<line x1="655" y1="375.5" x2="1158" y2="375.5" stroke="rgba(204,204,220,0.21)" stroke-width="1"/>
<line x1="655" y1="401.5" x2="1158" y2="401.5" stroke="rgba(204,204,220,0.21)" stroke-width="1"/>
<line x1="655" y1="428.5" x2="1158" y2="428.5" stroke="rgba(204,204,220,0.21)" stroke-width="1"/>
<line x1="655" y1="454.5" x2="1158" y2="454.5" stroke="rgba(204,204,220,0.21)" stroke-width="1"/>
<line x1="669.5" y1="375" x2="669.5" y2="455" stroke="rgba(204,204,220,0.21)" stroke-width="1"/>
<line x1="768.5" y1="375" x2="768.5" y2="455" stroke="rgba(204,204,220,0.21)" stroke-width="1"/>
<line x1="868.5" y1="375" x2="868.5" y2="455" stroke="rgba(204,204,220,0.21)" stroke-width="1"/>
<line x1="967.5" y1="375" x2="967.5" y2="455" stroke="rgba(204,204,220,0.21)" stroke-width="1"/>
<line x1="1066.5" y1="375" x2="1066.5" y2="455" stroke="rgba(204,204,220,0.21)" stroke-width="1"/>
<text x="649" y="378.4" font-size="11.6" text-anchor="end" fill="rgb(204,204,220)" font-weight="normal" textLength="36.8" lengthAdjust="spacingAndGlyphs">150 GB</text>
<text x="649" y="404.4" font-size="11.6" text-anchor="end" fill="rgb(204,204,220)" font-weight="normal" textLength="36.8" lengthAdjust="spacingAndGlyphs">100 GB</text>
<text x="649" y="431.4" font-size="11.6" text-anchor="end" fill="rgb(204,204,220)" font-weight="normal" textLength="30.4" lengthAdjust="spacingAndGlyphs">50 GB</text>
<text x="649" y="457.4" font-size="11.6" text-anchor="end" fill="rgb(204,204,220)" font-weight="normal" textLength="24.6" lengthAdjust="spacingAndGlyphs">0 MB</text>
<text x="669.5" y="470.6" font-size="11.6" text-anchor="middle" fill="rgb(204,204,220)" font-weight="normal" >15:56</text>
<text x="768.5" y="470.6" font-size="11.6" text-anchor="middle" fill="rgb(204,204,220)" font-weight="normal" >15:58</text>
<text x="868.5" y="470.6" font-size="11.6" text-anchor="middle" fill="rgb(204,204,220)" font-weight="normal" >16:00</text>
<text x="967.5" y="470.6" font-size="11.6" text-anchor="middle" fill="rgb(204,204,220)" font-weight="normal" >16:02</text>
<text x="1066.5" y="470.6" font-size="11.6" text-anchor="middle" fill="rgb(204,204,220)" font-weight="normal" >16:04</text>
<polygon points="655.0,451.4 1149.5,451.4 1149.5,454.4 655.0,454.4" fill="#7EB26D" fill-opacity="0.1" stroke="none"/>
<polygon points="655.0,438.6 1149.5,438.6 1149.5,451.4 655.0,451.4" fill="#EAB839" fill-opacity="0.1" stroke="none"/>
<polygon points="655.0,386.4 1149.5,386.4 1149.5,438.6 655.0,438.6" fill="#EF843C" fill-opacity="0.1" stroke="none"/>
<polyline points="655.0,451.4 1149.5,451.4" fill="none" stroke="#7EB26D" stroke-width="1.5" stroke-linejoin="round"/>
<polyline points="655.0,438.6 1149.5,438.6" fill="none" stroke="#a9d3b0" stroke-width="2" stroke-linejoin="round"/>
<polyline points="655.0,386.4 1149.5,386.4" fill="none" stroke="#EF843C" stroke-width="1.2" stroke-linejoin="round"/>
<rect x="620" y="491" width="14" height="4" rx="1" fill="#7EB26D"/>
<text x="641.8" y="496" font-size="12" fill="rgb(204,204,220)" xml:space="preserve" textLength="257.8" lengthAdjust="spacingAndGlyphs">Used  Min: 5.39 GB  Max: 5.41 GB  Avg: 5.40 GB</text>
<rect x="620" y="509" width="14" height="4" rx="1" fill="#EAB839"/>
<text x="641.8" y="514" font-size="12" fill="rgb(204,204,220)" xml:space="preserve" textLength="271.4" lengthAdjust="spacingAndGlyphs">Cached  Min: 24.0 GB  Max: 24.4 GB  Avg: 24.2 GB</text>
<rect x="620" y="527" width="14" height="4" rx="1" fill="#6ED0E0"/>
<text x="641.8" y="532" font-size="12" fill="rgb(204,204,220)" xml:space="preserve" textLength="267.1" lengthAdjust="spacingAndGlyphs">Buffers  Min: 132 MB  Max: 134 MB  Avg: 133 MB</text>
<rect x="601.5" y="553.5" width="581" height="409" rx="2.5" fill="#181b1f" stroke="#25272c" stroke-width="1"/>
<text x="826.0" y="575" font-size="14.6" fill="rgb(204,204,220)" stroke="rgb(204,204,220)" stroke-width="0.35" textLength="131.1" lengthAdjust="spacingAndGlyphs">Per Disk Throughput</text>
<line x1="666" y1="603.5" x2="1158" y2="603.5" stroke="rgba(204,204,220,0.21)" stroke-width="1"/>
<line x1="666" y1="661.5" x2="1158" y2="661.5" stroke="rgba(204,204,220,0.21)" stroke-width="1"/>
<line x1="666" y1="719.5" x2="1158" y2="719.5" stroke="rgba(204,204,220,0.21)" stroke-width="1"/>
<line x1="666" y1="777.5" x2="1158" y2="777.5" stroke="rgba(204,204,220,0.21)" stroke-width="1"/>
<line x1="666" y1="835.5" x2="1158" y2="835.5" stroke="rgba(204,204,220,0.21)" stroke-width="1"/>
<line x1="680.5" y1="603" x2="680.5" y2="836" stroke="rgba(204,204,220,0.21)" stroke-width="1"/>
<line x1="777.5" y1="603" x2="777.5" y2="836" stroke="rgba(204,204,220,0.21)" stroke-width="1"/>
<line x1="874.5" y1="603" x2="874.5" y2="836" stroke="rgba(204,204,220,0.21)" stroke-width="1"/>
<line x1="971.5" y1="603" x2="971.5" y2="836" stroke="rgba(204,204,220,0.21)" stroke-width="1"/>
<line x1="1068.5" y1="603" x2="1068.5" y2="836" stroke="rgba(204,204,220,0.21)" stroke-width="1"/>
<text x="660" y="606.4" font-size="11.6" text-anchor="end" fill="rgb(204,204,220)" font-weight="normal" >1</text>
<text x="660" y="664.4" font-size="11.6" text-anchor="end" fill="rgb(204,204,220)" font-weight="normal" >0.500</text>
<text x="660" y="722.4" font-size="11.6" text-anchor="end" fill="rgb(204,204,220)" font-weight="normal" >0</text>
<text x="660" y="780.4" font-size="11.6" text-anchor="end" fill="rgb(204,204,220)" font-weight="normal" >-0.50</text>
<text x="660" y="838.4" font-size="11.6" text-anchor="end" fill="rgb(204,204,220)" font-weight="normal" >-1</text>
<text x="680.5" y="852.6" font-size="11.6" text-anchor="middle" fill="rgb(204,204,220)" font-weight="normal" >15:56</text>
<text x="777.5" y="852.6" font-size="11.6" text-anchor="middle" fill="rgb(204,204,220)" font-weight="normal" >15:58</text>
<text x="874.5" y="852.6" font-size="11.6" text-anchor="middle" fill="rgb(204,204,220)" font-weight="normal" >16:00</text>
<text x="971.5" y="852.6" font-size="11.6" text-anchor="middle" fill="rgb(204,204,220)" font-weight="normal" >16:02</text>
<text x="1068.5" y="852.6" font-size="11.6" text-anchor="middle" fill="rgb(204,204,220)" font-weight="normal" >16:04</text>
<text x="0" y="0" font-size="12" fill="rgb(204,204,220)" text-anchor="middle" textLength="30.8" lengthAdjust="spacingAndGlyphs" transform="translate(621.8,726) rotate(-90)">ops/s</text>
<polyline points="666.0,719.0 1150.0,719.0" fill="none" stroke="#cdb0ec" stroke-width="2" stroke-linejoin="round"/>
<rect x="620" y="872" width="14" height="4" rx="1" fill="#7EB26D"/>
<text x="641.8" y="877" font-size="12" fill="rgb(204,204,220)" xml:space="preserve" textLength="72.4" lengthAdjust="spacingAndGlyphs">sdb-w  Avg: 0</text>
<rect x="724" y="872" width="14" height="4" rx="1" fill="#EAB839"/>
<text x="745.8" y="877" font-size="12" fill="rgb(204,204,220)" xml:space="preserve" textLength="72.9" lengthAdjust="spacingAndGlyphs">sdc-w  Avg: 0</text>
<rect x="828" y="872" width="14" height="4" rx="1" fill="#6ED0E0"/>
<text x="849.8" y="877" font-size="12" fill="rgb(204,204,220)" xml:space="preserve" textLength="73.5" lengthAdjust="spacingAndGlyphs">sdd-w  Avg: 0</text>
<rect x="933" y="872" width="14" height="4" rx="1" fill="#EF843C"/>
<text x="954.8" y="877" font-size="12" fill="rgb(204,204,220)" xml:space="preserve" textLength="72.1" lengthAdjust="spacingAndGlyphs">sde-w  Avg: 0</text>
<rect x="1036" y="872" width="14" height="4" rx="1" fill="#E24D42"/>
<text x="1057.8" y="877" font-size="12" fill="rgb(204,204,220)" xml:space="preserve" textLength="70.2" lengthAdjust="spacingAndGlyphs">sdf-w  Avg: 0</text>
<rect x="620" y="890" width="14" height="4" rx="1" fill="#1F78C1"/>
<text x="641.8" y="895" font-size="12" fill="rgb(204,204,220)" xml:space="preserve" textLength="72.4" lengthAdjust="spacingAndGlyphs">sdg-w  Avg: 0</text>
<rect x="724" y="890" width="14" height="4" rx="1" fill="#BA43A9"/>
<text x="745.8" y="895" font-size="12" fill="rgb(204,204,220)" xml:space="preserve" textLength="68.7" lengthAdjust="spacingAndGlyphs">sdb-r  Avg: 0</text>
<rect x="824" y="890" width="14" height="4" rx="1" fill="#705DA0"/>
<text x="845.8" y="895" font-size="12" fill="rgb(204,204,220)" xml:space="preserve" textLength="67.7" lengthAdjust="spacingAndGlyphs">sdc-r  Avg: 0</text>
<rect x="923" y="890" width="14" height="4" rx="1" fill="#508642"/>
<text x="944.8" y="895" font-size="12" fill="rgb(204,204,220)" xml:space="preserve" textLength="68.1" lengthAdjust="spacingAndGlyphs">sdd-r  Avg: 0</text>
<rect x="1022" y="890" width="14" height="4" rx="1" fill="#CCA300"/>
<text x="1043.8" y="895" font-size="12" fill="rgb(204,204,220)" xml:space="preserve" textLength="67.2" lengthAdjust="spacingAndGlyphs">sde-r  Avg: 0</text>
<rect x="620" y="908" width="14" height="4" rx="1" fill="#447EBC"/>
<text x="641.8" y="913" font-size="12" fill="rgb(204,204,220)" xml:space="preserve" textLength="65.2" lengthAdjust="spacingAndGlyphs">sdf-r  Avg: 0</text>
<rect x="716" y="908" width="14" height="4" rx="1" fill="#C15C17"/>
<text x="737.8" y="913" font-size="12" fill="rgb(204,204,220)" xml:space="preserve" textLength="69.0" lengthAdjust="spacingAndGlyphs">sdg-r  Avg: 0</text>
<rect x="816" y="908" width="14" height="4" rx="1" fill="#890F02"/>
<text x="837.8" y="913" font-size="12" fill="rgb(204,204,220)" xml:space="preserve" textLength="68.4" lengthAdjust="spacingAndGlyphs">sdh-r  Avg: 0</text>
<rect x="916" y="908" width="14" height="4" rx="1" fill="#0A437C"/>
<text x="937.8" y="913" font-size="12" fill="rgb(204,204,220)" xml:space="preserve" textLength="63.5" lengthAdjust="spacingAndGlyphs">sdi-r  Avg: 0</text>
<rect x="1011" y="908" width="14" height="4" rx="1" fill="#6D1F62"/>
<text x="1032.8" y="913" font-size="12" fill="rgb(204,204,220)" xml:space="preserve" textLength="63.2" lengthAdjust="spacingAndGlyphs">sdj-r  Avg: 0</text>
<rect x="620" y="926" width="14" height="4" rx="1" fill="#584477"/>
<text x="641.8" y="931" font-size="12" fill="rgb(204,204,220)" xml:space="preserve" textLength="68.2" lengthAdjust="spacingAndGlyphs">sdk-r  Avg: 0</text>
<rect x="720" y="926" width="14" height="4" rx="1" fill="#B7DBAB"/>
<text x="741.8" y="931" font-size="12" fill="rgb(204,204,220)" xml:space="preserve" textLength="62.9" lengthAdjust="spacingAndGlyphs">sdl-r  Avg: 0</text>
<rect x="814" y="926" width="14" height="4" rx="1" fill="#F4D598"/>
<text x="835.8" y="931" font-size="12" fill="rgb(204,204,220)" xml:space="preserve" textLength="73.4" lengthAdjust="spacingAndGlyphs">sdh-w  Avg: 0</text>
<rect x="919" y="926" width="14" height="4" rx="1" fill="#70DBED"/>
<text x="940.8" y="931" font-size="12" fill="rgb(204,204,220)" xml:space="preserve" textLength="69.1" lengthAdjust="spacingAndGlyphs">sdi-w  Avg: 0</text>
<rect x="1019" y="926" width="14" height="4" rx="1" fill="#F9BA8F"/>
<text x="1040.8" y="931" font-size="12" fill="rgb(204,204,220)" xml:space="preserve" textLength="68.5" lengthAdjust="spacingAndGlyphs">sdj-w  Avg: 0</text>
<rect x="620" y="944" width="14" height="4" rx="1" fill="#F29191"/>
<text x="641.8" y="949" font-size="12" fill="rgb(204,204,220)" xml:space="preserve" textLength="72.4" lengthAdjust="spacingAndGlyphs">sdk-w  Avg: 0</text>
<rect x="724" y="944" width="14" height="4" rx="1" fill="#82B5D8"/>
<text x="745.8" y="949" font-size="12" fill="rgb(204,204,220)" xml:space="preserve" textLength="68.7" lengthAdjust="spacingAndGlyphs">sdl-w  Avg: 0</text>
<rect x="824" y="944" width="14" height="4" rx="1" fill="#E5A8E2"/>
<text x="845.8" y="949" font-size="12" fill="rgb(204,204,220)" xml:space="preserve" textLength="86.0" lengthAdjust="spacingAndGlyphs">Mean-W  Avg: 0</text>
<rect x="941" y="944" width="14" height="4" rx="1" fill="#AEA2E0"/>
<text x="962.8" y="949" font-size="12" fill="rgb(204,204,220)" xml:space="preserve" textLength="80.3" lengthAdjust="spacingAndGlyphs">Mean-R  Avg: 0</text>
<rect x="1190.5" y="97.5" width="581" height="219" rx="2.5" fill="#181b1f" stroke="#25272c" stroke-width="1"/>
<text x="1417.7" y="119" font-size="14.6" fill="rgb(204,204,220)" stroke="rgb(204,204,220)" stroke-width="0.35" textLength="125.8" lengthAdjust="spacingAndGlyphs">Network Bandwidth</text>
<line x1="1250" y1="147.5" x2="1747" y2="147.5" stroke="rgba(204,204,220,0.21)" stroke-width="1"/>
<line x1="1250" y1="170.5" x2="1747" y2="170.5" stroke="rgba(204,204,220,0.21)" stroke-width="1"/>
<line x1="1250" y1="194.5" x2="1747" y2="194.5" stroke="rgba(204,204,220,0.21)" stroke-width="1"/>
<line x1="1250" y1="219.5" x2="1747" y2="219.5" stroke="rgba(204,204,220,0.21)" stroke-width="1"/>
<line x1="1250" y1="242.5" x2="1747" y2="242.5" stroke="rgba(204,204,220,0.21)" stroke-width="1"/>
<line x1="1264.5" y1="147" x2="1264.5" y2="243" stroke="rgba(204,204,220,0.21)" stroke-width="1"/>
<line x1="1362.5" y1="147" x2="1362.5" y2="243" stroke="rgba(204,204,220,0.21)" stroke-width="1"/>
<line x1="1460.5" y1="147" x2="1460.5" y2="243" stroke="rgba(204,204,220,0.21)" stroke-width="1"/>
<line x1="1558.5" y1="147" x2="1558.5" y2="243" stroke="rgba(204,204,220,0.21)" stroke-width="1"/>
<line x1="1656.5" y1="147" x2="1656.5" y2="243" stroke="rgba(204,204,220,0.21)" stroke-width="1"/>
<text x="1244" y="150.4" font-size="11.6" text-anchor="end" fill="rgb(204,204,220)" font-weight="normal" >80 Mb/s</text>
<text x="1244" y="173.4" font-size="11.6" text-anchor="end" fill="rgb(204,204,220)" font-weight="normal" >60 Mb/s</text>
<text x="1244" y="197.4" font-size="11.6" text-anchor="end" fill="rgb(204,204,220)" font-weight="normal" >40 Mb/s</text>
<text x="1244" y="222.4" font-size="11.6" text-anchor="end" fill="rgb(204,204,220)" font-weight="normal" >20 Mb/s</text>
<text x="1244" y="245.4" font-size="11.6" text-anchor="end" fill="rgb(204,204,220)" font-weight="normal" >0 kb/s</text>
<text x="1264.5" y="260.6" font-size="11.6" text-anchor="middle" fill="rgb(204,204,220)" font-weight="normal" >15:56</text>
<text x="1362.5" y="260.6" font-size="11.6" text-anchor="middle" fill="rgb(204,204,220)" font-weight="normal" >15:58</text>
<text x="1460.5" y="260.6" font-size="11.6" text-anchor="middle" fill="rgb(204,204,220)" font-weight="normal" >16:00</text>
<text x="1558.5" y="260.6" font-size="11.6" text-anchor="middle" fill="rgb(204,204,220)" font-weight="normal" >16:02</text>
<text x="1656.5" y="260.6" font-size="11.6" text-anchor="middle" fill="rgb(204,204,220)" font-weight="normal" >16:04</text>
<polygon points="1250.0,217.8 1256.7,218.6 1264.8,217.1 1273.0,216.1 1281.1,218.4 1289.3,219.1 1297.5,218.2 1305.6,219.4 1313.8,218.5 1321.9,216.4 1330.1,219.5 1338.3,220.6 1346.4,218.3 1354.6,219.3 1362.7,219.7 1370.9,216.6 1379.1,220.2 1387.2,219.5 1395.4,219.9 1403.5,220.2 1411.7,218.3 1419.9,217.9 1428.0,218.9 1436.2,219.4 1444.3,219.9 1452.5,219.0 1460.7,219.4 1468.8,215.5 1477.0,220.5 1485.1,220.5 1493.3,219.9 1501.5,220.7 1509.6,220.6 1517.8,215.4 1525.9,220.2 1534.1,221.5 1542.3,218.8 1550.4,219.1 1558.6,221.9 1566.7,216.6 1574.9,218.2 1583.1,220.6 1591.2,220.3 1599.4,218.0 1607.5,218.6 1615.7,217.7 1623.9,217.2 1632.0,220.9 1640.2,221.0 1648.3,219.0 1656.5,221.0 1664.7,220.9 1672.8,217.1 1681.0,218.8 1689.1,221.4 1697.3,219.1 1705.5,219.6 1713.6,221.9 1721.8,217.9 1729.9,220.0 1738.1,219.6 1738.1,242.3 1729.9,242.3 1721.8,242.3 1713.6,242.3 1705.5,242.3 1697.3,242.3 1689.1,242.3 1681.0,242.3 1672.8,242.3 1664.7,242.3 1656.5,242.3 1648.3,242.3 1640.2,242.3 1632.0,242.3 1623.9,242.3 1615.7,242.3 1607.5,242.3 1599.4,242.3 1591.2,242.3 1583.1,242.3 1574.9,242.3 1566.7,242.3 1558.6,242.3 1550.4,242.3 1542.3,242.3 1534.1,242.3 1525.9,242.3 1517.8,242.3 1509.6,242.3 1501.5,242.3 1493.3,242.3 1485.1,242.3 1477.0,242.3 1468.8,242.3 1460.7,242.3 1452.5,242.3 1444.3,242.3 1436.2,242.3 1428.0,242.3 1419.9,242.3 1411.7,242.3 1403.5,242.3 1395.4,242.3 1387.2,242.3 1379.1,242.3 1370.9,242.3 1362.7,242.3 1354.6,242.3 1346.4,242.3 1338.3,242.3 1330.1,242.3 1321.9,242.3 1313.8,242.3 1305.6,242.3 1297.5,242.3 1289.3,242.3 1281.1,242.3 1273.0,242.3 1264.8,242.3 1256.7,242.3 1250.0,242.3" fill="#7EB26D" fill-opacity="0.1" stroke="none"/>
<polygon points="1250.0,175.9 1256.7,178.5 1264.8,173.8 1273.0,170.9 1281.1,177.8 1289.3,180.0 1297.5,177.1 1305.6,180.7 1313.8,178.2 1321.9,171.6 1330.1,181.1 1338.3,184.4 1346.4,177.5 1354.6,180.4 1362.7,181.8 1370.9,172.4 1379.1,183.3 1387.2,181.1 1395.4,182.2 1403.5,183.3 1411.7,177.5 1419.9,176.4 1428.0,179.3 1436.2,180.7 1444.3,182.2 1452.5,179.6 1460.7,180.7 1468.8,169.1 1477.0,184.0 1485.1,184.0 1493.3,182.2 1501.5,184.7 1509.6,184.4 1517.8,168.7 1525.9,183.3 1534.1,187.3 1542.3,179.1 1550.4,180.0 1558.6,188.4 1566.7,172.4 1574.9,177.1 1583.1,184.4 1591.2,183.6 1599.4,176.6 1607.5,178.5 1615.7,175.6 1623.9,174.2 1632.0,185.5 1640.2,185.8 1648.3,179.6 1656.5,185.8 1664.7,185.5 1672.8,173.8 1681.0,178.9 1689.1,186.9 1697.3,180.0 1705.5,181.5 1713.6,188.4 1721.8,176.4 1729.9,182.5 1738.1,181.5 1738.1,219.6 1729.9,220.0 1721.8,217.9 1713.6,221.9 1705.5,219.6 1697.3,219.1 1689.1,221.4 1681.0,218.8 1672.8,217.1 1664.7,220.9 1656.5,221.0 1648.3,219.0 1640.2,221.0 1632.0,220.9 1623.9,217.2 1615.7,217.7 1607.5,218.6 1599.4,218.0 1591.2,220.3 1583.1,220.6 1574.9,218.2 1566.7,216.6 1558.6,221.9 1550.4,219.1 1542.3,218.8 1534.1,221.5 1525.9,220.2 1517.8,215.4 1509.6,220.6 1501.5,220.7 1493.3,219.9 1485.1,220.5 1477.0,220.5 1468.8,215.5 1460.7,219.4 1452.5,219.0 1444.3,219.9 1436.2,219.4 1428.0,218.9 1419.9,217.9 1411.7,218.3 1403.5,220.2 1395.4,219.9 1387.2,219.5 1379.1,220.2 1370.9,216.6 1362.7,219.7 1354.6,219.3 1346.4,218.3 1338.3,220.6 1330.1,219.5 1321.9,216.4 1313.8,218.5 1305.6,219.4 1297.5,218.2 1289.3,219.1 1281.1,218.4 1273.0,216.1 1264.8,217.1 1256.7,218.6 1250.0,217.8" fill="#EAB839" fill-opacity="0.1" stroke="none"/>
<polyline points="1250.0,217.8 1256.7,218.6 1264.8,217.1 1273.0,216.1 1281.1,218.4 1289.3,219.1 1297.5,218.2 1305.6,219.4 1313.8,218.5 1321.9,216.4 1330.1,219.5 1338.3,220.6 1346.4,218.3 1354.6,219.3 1362.7,219.7 1370.9,216.6 1379.1,220.2 1387.2,219.5 1395.4,219.9 1403.5,220.2 1411.7,218.3 1419.9,217.9 1428.0,218.9 1436.2,219.4 1444.3,219.9 1452.5,219.0 1460.7,219.4 1468.8,215.5 1477.0,220.5 1485.1,220.5 1493.3,219.9 1501.5,220.7 1509.6,220.6 1517.8,215.4 1525.9,220.2 1534.1,221.5 1542.3,218.8 1550.4,219.1 1558.6,221.9 1566.7,216.6 1574.9,218.2 1583.1,220.6 1591.2,220.3 1599.4,218.0 1607.5,218.6 1615.7,217.7 1623.9,217.2 1632.0,220.9 1640.2,221.0 1648.3,219.0 1656.5,221.0 1664.7,220.9 1672.8,217.1 1681.0,218.8 1689.1,221.4 1697.3,219.1 1705.5,219.6 1713.6,221.9 1721.8,217.9 1729.9,220.0 1738.1,219.6" fill="none" stroke="#7EB26D" stroke-width="1" stroke-linejoin="round"/>
<polyline points="1250.0,175.9 1256.7,178.5 1264.8,173.8 1273.0,170.9 1281.1,177.8 1289.3,180.0 1297.5,177.1 1305.6,180.7 1313.8,178.2 1321.9,171.6 1330.1,181.1 1338.3,184.4 1346.4,177.5 1354.6,180.4 1362.7,181.8 1370.9,172.4 1379.1,183.3 1387.2,181.1 1395.4,182.2 1403.5,183.3 1411.7,177.5 1419.9,176.4 1428.0,179.3 1436.2,180.7 1444.3,182.2 1452.5,179.6 1460.7,180.7 1468.8,169.1 1477.0,184.0 1485.1,184.0 1493.3,182.2 1501.5,184.7 1509.6,184.4 1517.8,168.7 1525.9,183.3 1534.1,187.3 1542.3,179.1 1550.4,180.0 1558.6,188.4 1566.7,172.4 1574.9,177.1 1583.1,184.4 1591.2,183.6 1599.4,176.6 1607.5,178.5 1615.7,175.6 1623.9,174.2 1632.0,185.5 1640.2,185.8 1648.3,179.6 1656.5,185.8 1664.7,185.5 1672.8,173.8 1681.0,178.9 1689.1,186.9 1697.3,180.0 1705.5,181.5 1713.6,188.4 1721.8,176.4 1729.9,182.5 1738.1,181.5" fill="none" stroke="#EAB839" stroke-width="1" stroke-linejoin="round"/>
<rect x="1209" y="280" width="14" height="4" rx="1" fill="#7EB26D"/>
<text x="1230.8" y="285" font-size="12" fill="rgb(204,204,220)" xml:space="preserve" textLength="314.9" lengthAdjust="spacingAndGlyphs">recieved  Min: 16.8 Mb/s  Max: 23.1 Mb/s  Avg: 19.6 Mb/s</text>
<rect x="1209" y="298" width="14" height="4" rx="1" fill="#EAB839"/>
<text x="1230.8" y="303" font-size="12" fill="rgb(204,204,220)" xml:space="preserve" textLength="292.8" lengthAdjust="spacingAndGlyphs">sent  Min: 28.4 Mb/s  Max: 38.8 Mb/s  Avg: 32.9 Mb/s</text>
<rect x="1190.5" y="325.5" width="581" height="219" rx="2.5" fill="#181b1f" stroke="#25272c" stroke-width="1"/>
<text x="1453.7" y="347" font-size="14.6" fill="rgb(204,204,220)" stroke="rgb(204,204,220)" stroke-width="0.35" textLength="53.5" lengthAdjust="spacingAndGlyphs">Disk BW</text>
<line x1="1261" y1="375.5" x2="1747" y2="375.5" stroke="rgba(204,204,220,0.21)" stroke-width="1"/>
<line x1="1261" y1="413.5" x2="1747" y2="413.5" stroke="rgba(204,204,220,0.21)" stroke-width="1"/>
<line x1="1261" y1="451.5" x2="1747" y2="451.5" stroke="rgba(204,204,220,0.21)" stroke-width="1"/>
<line x1="1261" y1="489.5" x2="1747" y2="489.5" stroke="rgba(204,204,220,0.21)" stroke-width="1"/>
<line x1="1275.5" y1="375" x2="1275.5" y2="490" stroke="rgba(204,204,220,0.21)" stroke-width="1"/>
<line x1="1370.5" y1="375" x2="1370.5" y2="490" stroke="rgba(204,204,220,0.21)" stroke-width="1"/>
<line x1="1466.5" y1="375" x2="1466.5" y2="490" stroke="rgba(204,204,220,0.21)" stroke-width="1"/>
<line x1="1562.5" y1="375" x2="1562.5" y2="490" stroke="rgba(204,204,220,0.21)" stroke-width="1"/>
<line x1="1658.5" y1="375" x2="1658.5" y2="490" stroke="rgba(204,204,220,0.21)" stroke-width="1"/>
<text x="1255" y="378.4" font-size="11.6" text-anchor="end" fill="rgb(204,204,220)" font-weight="normal" >1.50 MB/s</text>
<text x="1255" y="416.4" font-size="11.6" text-anchor="end" fill="rgb(204,204,220)" font-weight="normal" >1 MB/s</text>
<text x="1255" y="454.4" font-size="11.6" text-anchor="end" fill="rgb(204,204,220)" font-weight="normal" >500 kB/s</text>
<text x="1255" y="492.4" font-size="11.6" text-anchor="end" fill="rgb(204,204,220)" font-weight="normal" >0 kB/s</text>
<text x="1275.5" y="506.6" font-size="11.6" text-anchor="middle" fill="rgb(204,204,220)" font-weight="normal" >15:56</text>
<text x="1370.5" y="506.6" font-size="11.6" text-anchor="middle" fill="rgb(204,204,220)" font-weight="normal" >15:58</text>
<text x="1466.5" y="506.6" font-size="11.6" text-anchor="middle" fill="rgb(204,204,220)" font-weight="normal" >16:00</text>
<text x="1562.5" y="506.6" font-size="11.6" text-anchor="middle" fill="rgb(204,204,220)" font-weight="normal" >16:02</text>
<text x="1658.5" y="506.6" font-size="11.6" text-anchor="middle" fill="rgb(204,204,220)" font-weight="normal" >16:04</text>
<polygon points="1261.0,431.2 1266.8,432.8 1274.8,432.4 1282.8,425.4 1290.8,432.4 1298.8,435.3 1306.7,432.7 1314.7,435.5 1322.7,435.5 1330.7,425.8 1338.7,436.0 1346.7,438.4 1354.7,433.0 1362.7,455.0 1370.7,439.4 1378.6,425.8 1386.6,436.5 1394.6,444.8 1402.6,433.7 1410.6,435.3 1418.6,441.5 1426.6,426.3 1434.6,434.5 1442.6,440.2 1450.6,434.3 1458.5,435.3 1466.5,438.6 1474.5,425.3 1482.5,435.7 1490.5,440.1 1498.5,436.9 1506.5,436.5 1514.5,441.1 1522.5,425.4 1530.5,436.5 1538.5,460.8 1546.4,439.4 1554.4,435.3 1562.4,437.4 1570.4,441.5 1578.4,428.3 1586.4,435.3 1594.4,440.6 1602.4,432.7 1610.4,433.2 1618.3,435.7 1626.3,427.7 1634.3,437.8 1642.3,440.6 1650.3,435.3 1658.3,439.8 1666.3,439.0 1674.3,428.7 1682.3,406.5 1690.3,417.2 1698.2,433.7 1706.2,450.5 1714.2,443.1 1722.2,431.2 1730.2,434.9 1738.2,445.3 1738.2,489.5 1730.2,489.5 1722.2,489.5 1714.2,489.5 1706.2,489.5 1698.2,489.5 1690.3,489.5 1682.3,489.5 1674.3,489.5 1666.3,489.5 1658.3,489.5 1650.3,489.5 1642.3,489.5 1634.3,489.5 1626.3,489.5 1618.3,489.5 1610.4,489.5 1602.4,489.5 1594.4,489.5 1586.4,489.5 1578.4,489.5 1570.4,489.5 1562.4,489.5 1554.4,489.5 1546.4,489.5 1538.5,489.5 1530.5,489.5 1522.5,489.5 1514.5,489.5 1506.5,489.5 1498.5,489.5 1490.5,489.5 1482.5,489.5 1474.5,489.5 1466.5,489.5 1458.5,489.5 1450.6,489.5 1442.6,489.5 1434.6,489.5 1426.6,489.5 1418.6,489.5 1410.6,489.5 1402.6,489.5 1394.6,489.5 1386.6,489.5 1378.6,489.5 1370.7,489.5 1362.7,489.5 1354.7,489.5 1346.7,489.5 1338.7,489.5 1330.7,489.5 1322.7,489.5 1314.7,489.5 1306.7,489.5 1298.8,489.5 1290.8,489.5 1282.8,489.5 1274.8,489.5 1266.8,489.5 1261.0,489.5" fill="#EAB839" fill-opacity="0.1" stroke="none"/>
<polyline points="1261.0,489.0 1738.2,489.0" fill="none" stroke="#7EB26D" stroke-width="2" stroke-linejoin="round"/>
<polyline points="1261.0,431.2 1266.8,432.8 1274.8,432.4 1282.8,425.4 1290.8,432.4 1298.8,435.3 1306.7,432.7 1314.7,435.5 1322.7,435.5 1330.7,425.8 1338.7,436.0 1346.7,438.4 1354.7,433.0 1362.7,455.0 1370.7,439.4 1378.6,425.8 1386.6,436.5 1394.6,444.8 1402.6,433.7 1410.6,435.3 1418.6,441.5 1426.6,426.3 1434.6,434.5 1442.6,440.2 1450.6,434.3 1458.5,435.3 1466.5,438.6 1474.5,425.3 1482.5,435.7 1490.5,440.1 1498.5,436.9 1506.5,436.5 1514.5,441.1 1522.5,425.4 1530.5,436.5 1538.5,460.8 1546.4,439.4 1554.4,435.3 1562.4,437.4 1570.4,441.5 1578.4,428.3 1586.4,435.3 1594.4,440.6 1602.4,432.7 1610.4,433.2 1618.3,435.7 1626.3,427.7 1634.3,437.8 1642.3,440.6 1650.3,435.3 1658.3,439.8 1666.3,439.0 1674.3,428.7 1682.3,406.5 1690.3,417.2 1698.2,433.7 1706.2,450.5 1714.2,443.1 1722.2,431.2 1730.2,434.9 1738.2,445.3" fill="none" stroke="#EAB839" stroke-width="1" stroke-linejoin="round"/>
<rect x="1209" y="526" width="14" height="4" rx="1" fill="#7EB26D"/>
<text x="1230.8" y="531" font-size="12" fill="rgb(204,204,220)" xml:space="preserve" textLength="228.5" lengthAdjust="spacingAndGlyphs">Read  Max: 0.400 kB/s  Avg: 0.00656 kB/s</text>
<rect x="1469" y="526" width="14" height="4" rx="1" fill="#EAB839"/>
<text x="1490.8" y="531" font-size="12" fill="rgb(204,204,220)" xml:space="preserve" textLength="202.8" lengthAdjust="spacingAndGlyphs">Write  Max: 1.09 MB/s  Avg: 704 kB/s</text>
<rect x="1190.5" y="553.5" width="581" height="409" rx="2.5" fill="#181b1f" stroke="#25272c" stroke-width="1"/>
<text x="1432.2" y="575" font-size="14.6" fill="rgb(204,204,220)" stroke="rgb(204,204,220)" stroke-width="0.35" textLength="96.9" lengthAdjust="spacingAndGlyphs">Disk Utilization</text>
<line x1="1234" y1="624.5" x2="1747" y2="624.5" stroke="rgba(204,204,220,0.21)" stroke-width="1"/>
<line x1="1234" y1="676.5" x2="1747" y2="676.5" stroke="rgba(204,204,220,0.21)" stroke-width="1"/>
<line x1="1234" y1="729.5" x2="1747" y2="729.5" stroke="rgba(204,204,220,0.21)" stroke-width="1"/>
<line x1="1234" y1="782.5" x2="1747" y2="782.5" stroke="rgba(204,204,220,0.21)" stroke-width="1"/>
<line x1="1234" y1="834.5" x2="1747" y2="834.5" stroke="rgba(204,204,220,0.21)" stroke-width="1"/>
<line x1="1248.5" y1="603" x2="1248.5" y2="835" stroke="rgba(204,204,220,0.21)" stroke-width="1"/>
<line x1="1350.5" y1="603" x2="1350.5" y2="835" stroke="rgba(204,204,220,0.21)" stroke-width="1"/>
<line x1="1451.5" y1="603" x2="1451.5" y2="835" stroke="rgba(204,204,220,0.21)" stroke-width="1"/>
<line x1="1552.5" y1="603" x2="1552.5" y2="835" stroke="rgba(204,204,220,0.21)" stroke-width="1"/>
<line x1="1654.5" y1="603" x2="1654.5" y2="835" stroke="rgba(204,204,220,0.21)" stroke-width="1"/>
<text x="1228" y="627.4" font-size="11.6" text-anchor="end" fill="rgb(204,204,220)" font-weight="normal" textLength="27.4" lengthAdjust="spacingAndGlyphs">100%</text>
<text x="1228" y="679.4" font-size="11.6" text-anchor="end" fill="rgb(204,204,220)" font-weight="normal" textLength="21.0" lengthAdjust="spacingAndGlyphs">75%</text>
<text x="1228" y="732.4" font-size="11.6" text-anchor="end" fill="rgb(204,204,220)" font-weight="normal" textLength="21.0" lengthAdjust="spacingAndGlyphs">50%</text>
<text x="1228" y="785.4" font-size="11.6" text-anchor="end" fill="rgb(204,204,220)" font-weight="normal" textLength="21.0" lengthAdjust="spacingAndGlyphs">25%</text>
<text x="1228" y="837.4" font-size="11.6" text-anchor="end" fill="rgb(204,204,220)" font-weight="normal" textLength="14.5" lengthAdjust="spacingAndGlyphs">0%</text>
<text x="1248.5" y="852.6" font-size="11.6" text-anchor="middle" fill="rgb(204,204,220)" font-weight="normal" >15:56</text>
<text x="1350.5" y="852.6" font-size="11.6" text-anchor="middle" fill="rgb(204,204,220)" font-weight="normal" >15:58</text>
<text x="1451.5" y="852.6" font-size="11.6" text-anchor="middle" fill="rgb(204,204,220)" font-weight="normal" >16:00</text>
<text x="1552.5" y="852.6" font-size="11.6" text-anchor="middle" fill="rgb(204,204,220)" font-weight="normal" >16:02</text>
<text x="1654.5" y="852.6" font-size="11.6" text-anchor="middle" fill="rgb(204,204,220)" font-weight="normal" >16:04</text>
<polyline points="1234.0,835.0 1739.0,835.0" fill="none" stroke="#b5532a" stroke-width="2" stroke-linejoin="round"/>
<rect x="1209" y="872" width="14" height="4" rx="1" fill="#7EB26D"/>
<text x="1230.8" y="877" font-size="12" fill="rgb(204,204,220)" xml:space="preserve" textLength="120.3" lengthAdjust="spacingAndGlyphs">sda  Max: 0%  Avg: 0%</text>
<rect x="1361" y="872" width="14" height="4" rx="1" fill="#EAB839"/>
<text x="1382.8" y="877" font-size="12" fill="rgb(204,204,220)" xml:space="preserve" textLength="120.7" lengthAdjust="spacingAndGlyphs">sdb  Max: 0%  Avg: 0%</text>
<rect x="1513" y="872" width="14" height="4" rx="1" fill="#6ED0E0"/>
<text x="1534.8" y="877" font-size="12" fill="rgb(204,204,220)" xml:space="preserve" textLength="119.2" lengthAdjust="spacingAndGlyphs">sdc  Max: 0%  Avg: 0%</text>
<rect x="1209" y="890" width="14" height="4" rx="1" fill="#EF843C"/>
<text x="1230.8" y="895" font-size="12" fill="rgb(204,204,220)" xml:space="preserve" textLength="120.3" lengthAdjust="spacingAndGlyphs">sdd  Max: 0%  Avg: 0%</text>
<rect x="1361" y="890" width="14" height="4" rx="1" fill="#E24D42"/>
<text x="1382.8" y="895" font-size="12" fill="rgb(204,204,220)" xml:space="preserve" textLength="120.7" lengthAdjust="spacingAndGlyphs">sde  Max: 0%  Avg: 0%</text>
<rect x="1513" y="890" width="14" height="4" rx="1" fill="#1F78C1"/>
<text x="1534.8" y="895" font-size="12" fill="rgb(204,204,220)" xml:space="preserve" textLength="117.1" lengthAdjust="spacingAndGlyphs">sdf  Max: 0%  Avg: 0%</text>
<rect x="1209" y="908" width="14" height="4" rx="1" fill="#BA43A9"/>
<text x="1230.8" y="913" font-size="12" fill="rgb(204,204,220)" xml:space="preserve" textLength="120.3" lengthAdjust="spacingAndGlyphs">sdg  Max: 0%  Avg: 0%</text>
<rect x="1361" y="908" width="14" height="4" rx="1" fill="#705DA0"/>
<text x="1382.8" y="913" font-size="12" fill="rgb(204,204,220)" xml:space="preserve" textLength="120.7" lengthAdjust="spacingAndGlyphs">sdh  Max: 0%  Avg: 0%</text>
<rect x="1513" y="908" width="14" height="4" rx="1" fill="#508642"/>
<text x="1534.8" y="913" font-size="12" fill="rgb(204,204,220)" xml:space="preserve" textLength="116.3" lengthAdjust="spacingAndGlyphs">sdi  Max: 0%  Avg: 0%</text>
<rect x="1209" y="926" width="14" height="4" rx="1" fill="#CCA300"/>
<text x="1230.8" y="931" font-size="12" fill="rgb(204,204,220)" xml:space="preserve" textLength="117.4" lengthAdjust="spacingAndGlyphs">sdj  Max: 0%  Avg: 0%</text>
<rect x="1358" y="926" width="14" height="4" rx="1" fill="#447EBC"/>
<text x="1379.8" y="931" font-size="12" fill="rgb(204,204,220)" xml:space="preserve" textLength="119.8" lengthAdjust="spacingAndGlyphs">sdk  Max: 0%  Avg: 0%</text>
<rect x="1509" y="926" width="14" height="4" rx="1" fill="#C15C17"/>
<text x="1530.8" y="931" font-size="12" fill="rgb(204,204,220)" xml:space="preserve" textLength="115.1" lengthAdjust="spacingAndGlyphs">sdl  Max: 0%  Avg: 0%</text>
<rect x="1209" y="944" width="14" height="4" rx="1" fill="#890F02"/>
<text x="1230.8" y="949" font-size="12" fill="rgb(204,204,220)" xml:space="preserve" textLength="130.1" lengthAdjust="spacingAndGlyphs">Mean  Max: 0%  Avg: 0%</text>
<rect x="11.5" y="971.5" width="581" height="40" rx="2.5" fill="#181b1f" stroke="#25272c" stroke-width="1"/>
<rect x="601.5" y="971.5" width="581" height="40" rx="2.5" fill="#181b1f" stroke="#25272c" stroke-width="1"/>
<rect x="1190.5" y="971.5" width="581" height="40" rx="2.5" fill="#181b1f" stroke="#25272c" stroke-width="1"/>
</svg></body></html>
